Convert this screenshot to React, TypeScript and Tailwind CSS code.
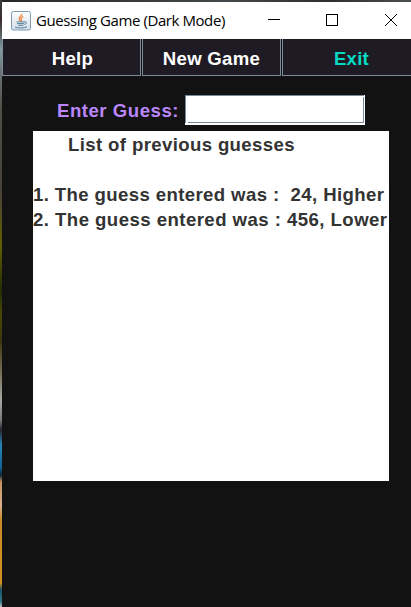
import React from "react";

function JavaIcon() {
  return (
    <svg width="20" height="20" viewBox="0 0 20 20" className="shrink-0">
      <defs>
        <linearGradient id="tile" x1="0" y1="0" x2="0" y2="1">
          <stop offset="0" stopColor="#ffffff" />
          <stop offset="1" stopColor="#d3dde6" />
        </linearGradient>
      </defs>
      <rect x="0.5" y="0.5" width="19" height="18.5" rx="1.8" fill="url(#tile)" stroke="#7f9bb0" />
      <path d="M10.8 2.8c1 2-3.5 3-2.6 5.300.3 1 1.200 1.500 1.400 2.300M12.300 5.500c-2.600 1.300-2.800 2.300-1.800 3.400.5.6.2 1.100-.3 1.500" fill="none" stroke="#ee8541" strokeWidth="1.3" />
      <path d="M5.500 10.900h8M6 12.600h7M7 14.300h5.500M4 16c2.500 1.300 9 1.300 12-.3M13.300 10.700c3-.5 2.600 2.400 0 2.600" fill="none" stroke="#55809f" strokeWidth="1" />
    </svg>
  );
}

function TitleBar() {
  return (
    <header className="flex h-[37px] items-center bg-white pl-[9px] text-black">
      <JavaIcon />
      <h1 className="mb-[2px] ml-[5px] w-[200px] whitespace-pre font-['Open_Sans',sans-serif] text-[15px] leading-5 tracking-[-0.42px]">Guessing Game (Dark Mode)</h1>
      <svg width="164" height="37" viewBox="0 0 164 37" className="shrink-0" fill="none" stroke="#000" shapeRendering="crispEdges">
        <path d="M32 17.500h12" />
        <rect x="90.500" y="12.500" width="11" height="11" />
        <path d="M149 12l12 12M161 12l-12 12" shapeRendering="auto" />
      </svg>
    </header>
  );
}

function MenuButton({ label, className }: { label: string; className: string }) {
  return (
    <button className={`h-[37px] w-[139px] shrink-0 whitespace-pre border-x border-b border-[#7a8a99] bg-[#1f1b24] pt-[3px] text-[18.600px] leading-5 font-bold tracking-[0.28px] ${className}`}>
      {label}
    </button>
  );
}

const guesses = [
  { text: "1. The guess entered was :  24, Higher", className: "tracking-[0.38px]" },
  { text: "2. The guess entered was : 456, Lower", className: "tracking-[0.45px]" },
];

export default function App() {
  return (
    <div className="flex h-[607px] w-[411px] overflow-hidden bg-[#121212] font-['Liberation_Sans',Arial,sans-serif]">
      <div className="w-[2px] shrink-0 bg-[linear-gradient(to_bottom,#393d42_0px,#392c2b_20px,#829ea2_50px,#6c7775_70px,#514e48_110px,#45413a_190px,#615f00_245px,#262d00_290px,#494900_315px,#3d340e_340px,#79745c_375px,#a6aaa4_400px,#777c7b_420px,#24252e_430px,#2785b5_445px,#126394_468px,#08273e_475px,#c89160_482px,#d6b28c_505px,#c98b29_520px,#d4901c_583px,#16516b_590px,#347a8a_602px,#c0c0c0_607px)]" />
      <div className="flex min-w-0 flex-1 flex-col">
        <div className="h-[2px] shrink-0 bg-[linear-gradient(to_right,#282829,#43494c_55%,#312e2d_80%,#4a5052)]" />
        <TitleBar />
        <nav className="flex h-[37px] shrink-0 gap-px bg-[#121212]">
          <MenuButton label="Help" className="pl-[2px] text-white" />
          <MenuButton label="New Game" className="text-white" />
          <MenuButton label="Exit" className="text-[#03dac5]" />
        </nav>
        <main className="flex flex-col pl-[31px] pt-[19px] font-bold text-[#333333]">
          <label className="flex h-[30px] items-center pl-[24px]">
            <span className="w-[128px] whitespace-pre pt-px text-[18.600px] leading-6 tracking-[0.52px] text-[#bb86fc]">Enter Guess:</span>
            <span className="flex h-[30px] w-[180px] flex-col bg-white pb-[2px] pr-px">
              <span className="flex h-[28px] flex-col border-l border-t border-[#7a8a99] pl-[2px] pt-px">
                <span className="h-[26px] border-b border-r border-[#7a8a99]" />
              </span>
            </span>
          </label>
          <section className="mt-[6px] h-[350px] w-[356px] whitespace-pre bg-white pt-px text-[18.600px] leading-[25px] tracking-[0.37px]">
            <h2 className="pl-[35px]">List of previous guesses</h2>
            <ol className="mt-[25px]">
              {guesses.map((guess) => (
                <li key={guess.text} className={guess.className}>{guess.text}</li>
              ))}
            </ol>
          </section>
        </main>
      </div>
    </div>
  );
}
